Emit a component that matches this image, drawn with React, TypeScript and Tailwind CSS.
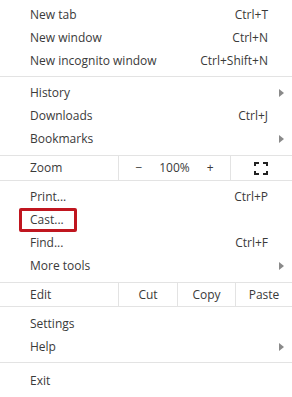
import React from 'react';

type Item = { label: string; shortcut?: string; submenu?: boolean; highlight?: boolean };

const Arrow = () => (
  <svg width="5" height="8" viewBox="0 0 5 8" className="absolute right-[8px] top-1/2 -translate-y-1/2">
    <path d="M0 0 L5 4 L0 8 Z" fill="#8a8a8a" />
  </svg>
);

const Row: React.FC<{ item: Item }> = ({ item }) => (
  <div className="relative flex h-[23px] items-center pl-[30px] pr-[24px]">
    <span className="relative">
      {item.label}
      {item.highlight && (
        <span className="absolute -left-[11px] -top-[3px] h-[24px] w-[58px] rounded-[2px] border-[3px] border-[#c0161f]"></span>
      )}
    </span>
    {item.shortcut && <span className="ml-auto">{item.shortcut}</span>}
    {item.submenu && <Arrow />}
  </div>
);

const Separator = () => <div className="my-[4px] h-px bg-[#e3e3e3]" />;

const FullscreenIcon = () => (
  <svg width="14" height="13" viewBox="0 0 14 13">
    <g fill="#222">
      <rect x="0" y="0" width="5" height="2" />
      <rect x="0" y="0" width="2" height="4" />
      <rect x="9" y="0" width="5" height="2" />
      <rect x="12" y="0" width="2" height="4" />
      <rect x="0" y="11" width="5" height="2" />
      <rect x="0" y="9" width="2" height="4" />
      <rect x="9" y="11" width="5" height="2" />
      <rect x="12" y="9" width="2" height="4" />
    </g>
  </svg>
);

export default function App() {
  const group1: Item[] = [
    { label: 'New tab', shortcut: 'Ctrl+T' },
    { label: 'New window', shortcut: 'Ctrl+N' },
    { label: 'New incognito window', shortcut: 'Ctrl+Shift+N' },
  ];
  const group2: Item[] = [
    { label: 'History', submenu: true },
    { label: 'Downloads', shortcut: 'Ctrl+J' },
    { label: 'Bookmarks', submenu: true },
  ];
  const group3: Item[] = [
    { label: 'Print...', shortcut: 'Ctrl+P' },
    { label: 'Cast...', highlight: true },
    { label: 'Find...', shortcut: 'Ctrl+F' },
    { label: 'More tools', submenu: true },
  ];
  const group4: Item[] = [
    { label: 'Settings' },
    { label: 'Help', submenu: true },
  ];

  return (
    <div className="h-[397px] w-[292px] bg-white pt-[3px] text-[12px] text-[#3a3a3a] [font-family:'Open_Sans','Noto_Sans',sans-serif]">
      {group1.map((i) => <Row key={i.label} item={i} />)}
      <Separator />
      {group2.map((i) => <Row key={i.label} item={i} />)}

      <div className="mt-[5px] flex h-[26px] items-center border-y border-[#e3e3e3]">
        <div className="flex h-full w-[118px] items-center pl-[30px]">Zoom</div>
        <div className="flex h-full w-[112px] items-center border-l border-[#e3e3e3]">
          <span className="w-[40px] text-center">−</span>
          <span className="w-[32px] text-center">100%</span>
          <span className="w-[40px] text-center">+</span>
        </div>
        <div className="flex h-full flex-1 items-center justify-center border-l border-[#e3e3e3] pr-[2px]">
          <FullscreenIcon />
        </div>
      </div>

      <div className="mt-[4px]">
        {group3.map((i) => <Row key={i.label} item={i} />)}
      </div>

      <div className="mt-[5px] flex h-[25px] items-center border-y border-[#e3e3e3]">
        <div className="flex h-full w-[118px] items-center pl-[30px]">Edit</div>
        <div className="flex h-full w-[59px] items-center justify-center border-l border-[#e3e3e3]">Cut</div>
        <div className="flex h-full w-[58px] items-center justify-center border-l border-[#e3e3e3]">Copy</div>
        <div className="flex h-full flex-1 items-center justify-center border-l border-[#e3e3e3]">Paste</div>
      </div>

      <div className="mt-[5px]">
        {group4.map((i) => <Row key={i.label} item={i} />)}
      </div>
      <Separator />
      <div className="mt-[6px]">
        <Row item={{ label: 'Exit' }} />
      </div>
    </div>
  );
}
